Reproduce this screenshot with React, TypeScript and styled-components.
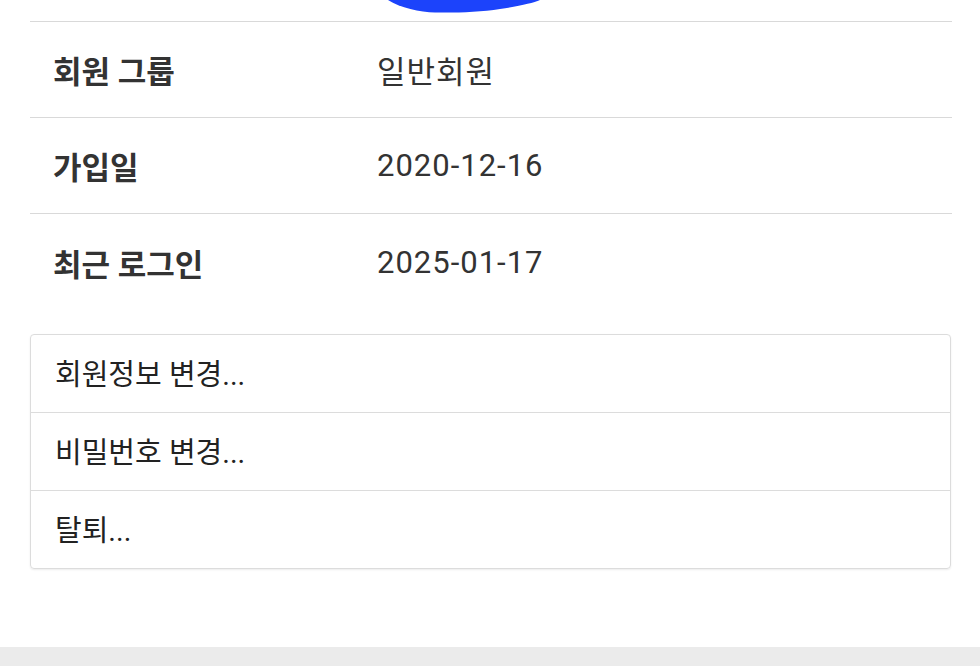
import styled, { createGlobalStyle } from 'styled-components';

const GlobalStyle = createGlobalStyle`
  html, body {
    margin: 0;
    padding: 0;
    background: #ffffff;
  }
  body {
    font-family: Roboto, "Noto Sans CJK KR", "Noto Sans", sans-serif;
    color: #333333;
  }
`;

const info = [
  { label: '회원 그룹', value: '일반회원' },
  { label: '가입일', value: '2020-12-16' },
  { label: '최근 로그인', value: '2025-01-17' },
];

const actions = ['회원정보 변경...', '비밀번호 변경...', '탈퇴...'];

const Avatar = () => (
  <svg width="156" height="14" viewBox="0 0 156 14">
    <path
      d="M3 0 C15 8 35 12 50 12.5 C70 13 95 12 115 9 C135 6 148 3 155 0 Z"
      fill="#1c43fb"
    />
  </svg>
);

export default function App() {
  return (
    <>
      <GlobalStyle />
      <Page>
        <Content>
          <AvatarStrip>
            <Avatar />
          </AvatarStrip>
          <InfoTable>
            {info.map((row, i) => (
              <InfoRow key={row.label} last={i === info.length - 1}>
                <Label>{row.label}</Label>
                <Value>{row.value}</Value>
              </InfoRow>
            ))}
          </InfoTable>
          <ActionCard>
            {actions.map((a) => (
              <ActionItem key={a}>{a}</ActionItem>
            ))}
          </ActionCard>
        </Content>
        <Footer />
      </Page>
    </>
  );
}

const Page = styled.div`
  min-height: 666px;
  display: flex;
  flex-direction: column;
`;

const Content = styled.div`
  padding: 0 28px 0 30px;
  height: 647px;
`;

const AvatarStrip = styled.div`
  height: 22px;
  padding-left: 355px;
  border-bottom: 1px solid #d9d9d9;
  box-sizing: border-box;
  overflow: hidden;
  svg {
    display: block;
  }
`;

const InfoTable = styled.div`
  display: flex;
  flex-direction: column;
`;

const InfoRow = styled.div<{ last?: boolean }>`
  display: flex;
  align-items: center;
  height: 96px;
  box-sizing: border-box;
  border-bottom: ${(p) => (p.last ? 'none' : '1px solid #d9d9d9')};
`;

const Label = styled.div`
  width: 324px;
  padding-left: 23px;
  font-size: 31px;
  font-weight: 700;
  color: #333333;
`;

const Value = styled.div`
  font-size: 31px;
  color: #333333;
  letter-spacing: 1px;
`;

const ActionCard = styled.div`
  margin-top: 24px;
  border: 1px solid #dcdcdc;
  border-radius: 4px;
  box-shadow: 0 1px 2px rgba(0, 0, 0, 0.08);
  display: flex;
  flex-direction: column;
  margin-right: 1px;
`;

const ActionItem = styled.div`
  height: 77px;
  box-sizing: border-box;
  padding: 0 0 4px 24px;
  display: flex;
  align-items: center;
  font-size: 29px;
  color: #222222;
  & + & {
    height: 78px;
    border-top: 1px solid #dcdcdc;
  }
`;

const Footer = styled.div`
  flex: 1;
  background: #ebebeb;
`;
